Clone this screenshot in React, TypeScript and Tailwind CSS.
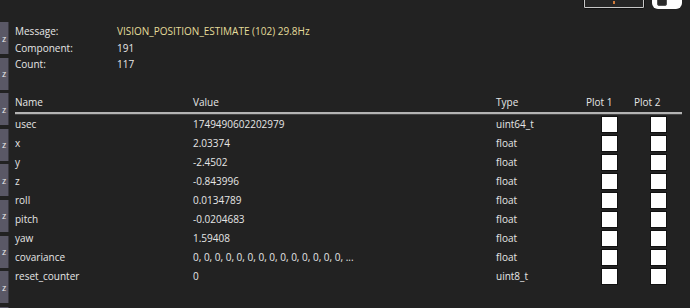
import React from 'react';

const FIELDS = [
  { name: 'usec', value: '1749490602202979', type: 'uint64_t' },
  { name: 'x', value: '2.03374', type: 'float' },
  { name: 'y', value: '-2.4502', type: 'float' },
  { name: 'z', value: '-0.843996', type: 'float' },
  { name: 'roll', value: '0.0134789', type: 'float' },
  { name: 'pitch', value: '-0.0204683', type: 'float' },
  { name: 'yaw', value: '1.59408', type: 'float' },
  { name: 'covariance', value: '0, 0, 0, 0, 0, 0, 0, 0, 0, 0, 0, 0, 0, 0, ...', type: 'float' },
  { name: 'reset_counter', value: '0', type: 'uint8_t' },
];

const COLS = 'grid grid-cols-[178px_303px_90px_48px_56px]';

export default function App() {
  return (
    <div
      className="w-[690px] h-[308px] bg-[#222222] overflow-hidden text-[10px] text-[#e6e6e6]"
      style={{ fontFamily: '"Open Sans", "Noto Sans", sans-serif' }}
    >
      {/* toolbar, scrolled mostly out of view */}
      <div className="h-[9px] flex justify-end items-end gap-[7px] pr-[8px] overflow-hidden">
        <div className="w-[62px] h-[16px] border border-[#111] rounded-[2px] bg-[#c8c8c8] p-[1px] flex">
          <div className="flex-1 bg-[#262626] flex justify-center items-end pb-[3px]">
            <div className="w-[2px] h-[3px] bg-[#d07a3a]" />
          </div>
        </div>
        <div className="w-[30px] h-[18px] rounded-[6px] bg-white flex items-end pl-[5px] pb-[3px]">
          <div className="w-[10px] h-[14px] rounded-[2px] bg-[#2a2a2a] border border-[#555]" />
        </div>
      </div>

      <div className="flex">
        {/* z buttons */}
        <div className="w-[9px] flex flex-col gap-[3.6px] pt-[13px] shrink-0">
          {Array.from({ length: 9 }).map((_, i) => (
            <div
              key={i}
              className="h-[32px] bg-[#5a5866] border-r border-[#3b3a42] flex items-center justify-center text-[9px] text-[#eee] leading-none"
            >
              {i < 8 ? 'z' : ''}
            </div>
          ))}
        </div>

        {/* content */}
        <div className="pl-[6px] pt-[14px] flex-1">
          <div className="leading-[16.5px]">
            <div className="flex">
              <span className="w-[102px]">Message:</span>
              <span className="text-[#e4dc9a]">VISION_POSITION_ESTIMATE (102) 29.8Hz</span>
            </div>
            <div className="flex">
              <span className="w-[102px]">Component:</span>
              <span>191</span>
            </div>
            <div className="flex">
              <span className="w-[102px]">Count:</span>
              <span>117</span>
            </div>
          </div>

          <div className={`${COLS} mt-[20px] h-[19px] items-center`}>
            <span>Name</span>
            <span>Value</span>
            <span>Type</span>
            <span>Plot 1</span>
            <span>Plot 2</span>
          </div>
          <div className="w-[667px] h-[3px] border-t-2 border-[#b4b4b4] border-b border-b-[#444]" />

          <div>
            {FIELDS.map((f) => (
              <div key={f.name} className={`${COLS} h-[19px] items-center`}>
                <span>{f.name}</span>
                <span>{f.value}</span>
                <span>{f.type}</span>
                <span className="pl-[15px]">
                  <span className="block w-[17px] h-[17px] bg-white border border-[#111]" />
                </span>
                <span className="pl-[16px]">
                  <span className="block w-[17px] h-[17px] bg-white border border-[#111]" />
                </span>
              </div>
            ))}
          </div>
        </div>
      </div>
    </div>
  );
}
